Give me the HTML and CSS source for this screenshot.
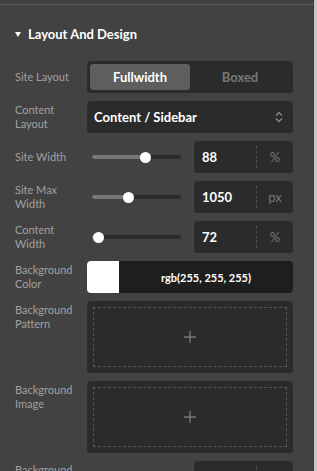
FILE: index.html
```html
<!DOCTYPE html>
<html lang="en">
<head>
  <meta charset="UTF-8">
  <title>Layout And Design</title>
  <link rel="stylesheet" href="styles.css">
</head>
<body>
  <div class="page">
    <div class="panel">
      <div class="section-title">
        <span class="caret"></span>
        <span>Layout And Design</span>
      </div>

      <div class="rows">
        <div class="row">
          <div class="label"><span>Site Layout</span></div>
          <div class="control">
            <div class="segmented">
              <div class="seg active">Fullwidth</div>
              <div class="seg">Boxed</div>
            </div>
          </div>
        </div>

        <div class="row">
          <div class="label"><span>Content Layout</span></div>
          <div class="control">
            <div class="select">
              <span>Content / Sidebar</span>
              <svg class="chevrons" width="8" height="12" viewBox="0 0 8 12">
                <path d="M1 4.5 L4 1.5 L7 4.5 M1 7.5 L4 10.5 L7 7.5" fill="none" stroke="#8a8a8a" stroke-width="1.3"/>
              </svg>
            </div>
          </div>
        </div>

        <div class="row">
          <div class="label"><span>Site Width</span></div>
          <div class="control split">
            <div class="slider"><div class="track"><div class="fill" style="width: 60%"></div></div></div>
            <div class="num"><span class="num-value">88</span><span class="num-unit">%</span></div>
          </div>
        </div>

        <div class="row">
          <div class="label"><span>Site Max Width</span></div>
          <div class="control split">
            <div class="slider"><div class="track"><div class="fill" style="width: 41%"></div></div></div>
            <div class="num"><span class="num-value">1050</span><span class="num-unit">px</span></div>
          </div>
        </div>

        <div class="row">
          <div class="label"><span>Content Width</span></div>
          <div class="control split">
            <div class="slider"><div class="track"><div class="fill" style="width: 7%"></div></div></div>
            <div class="num"><span class="num-value">72</span><span class="num-unit">%</span></div>
          </div>
        </div>

        <div class="row">
          <div class="label"><span>Background Color</span></div>
          <div class="control">
            <div class="color">
              <span class="swatch"></span>
              <span class="color-value">rgb(255, 255, 255)</span>
            </div>
          </div>
        </div>

        <div class="row">
          <div class="label"><span>Background Pattern</span></div>
          <div class="control">
            <div class="upload">
              <div class="upload-inner">
                <svg width="12" height="12" viewBox="0 0 12 12">
                  <path d="M6 0 V12 M0 6 H12" stroke="#777" stroke-width="1.4"/>
                </svg>
              </div>
            </div>
          </div>
        </div>

        <div class="row">
          <div class="label"><span>Background Image</span></div>
          <div class="control">
            <div class="upload">
              <div class="upload-inner">
                <svg width="12" height="12" viewBox="0 0 12 12">
                  <path d="M6 0 V12 M0 6 H12" stroke="#777" stroke-width="1.4"/>
                </svg>
              </div>
            </div>
          </div>
        </div>

        <div class="row">
          <div class="label"><span>Background Size</span></div>
          <div class="control split">
            <div class="slider"><div class="track"><div class="fill" style="width: 50%"></div></div></div>
            <div class="num"><span class="num-value">100</span><span class="num-unit">%</span></div>
          </div>
        </div>
      </div>
    </div>
    <div class="scrollbar"></div>
  </div>
</body>
</html>
```

FILE: styles.css
```css
body {
  margin: 0;
  background: #424242;
  font-family: Lato, "Open Sans", Arial, sans-serif;
  color: #fff;
}
.page {
  display: flex;
  height: 471px;
  overflow: hidden;
}
.panel {
  flex: 1;
  margin-top: 4px;
  border-top: 1px dotted #777;
}
.scrollbar {
  width: 3px;
  border-left: 1px solid #383838;
  background: #c8c8c8;
}
.section-title {
  display: flex;
  align-items: center;
  gap: 7px;
  padding: 20px 15px 0;
  height: 18px;
  margin-bottom: 18px;
  font-size: 13px;
  font-weight: 700;
}
.caret {
  width: 0;
  height: 0;
  border-left: 3.5px solid transparent;
  border-right: 3.5px solid transparent;
  border-top: 5px solid #fff;
}
.rows {
  display: flex;
  flex-direction: column;
  gap: 8px;
  padding: 0 20px 0 15px;
}
.row { display: flex; align-items: flex-start; }
.label {
  width: 72px;
  min-height: 32px;
  padding-right: 10px;
  box-sizing: border-box;
  display: flex;
  align-items: center;
  font-size: 11px;
  line-height: 14px;
  color: #a0a0a0;
}
.control { flex: 1; min-width: 0; }
.split {
  display: grid;
  grid-template-columns: 1fr 1fr;
  gap: 8px;
}

.segmented {
  display: flex;
  height: 32px;
  box-sizing: border-box;
  padding: 3px;
  background: #2b2b2b;
  border-radius: 4px;
}
.seg {
  flex: 1;
  display: flex;
  align-items: center;
  justify-content: center;
  font-size: 13px;
  font-weight: 700;
  color: #777;
  border-radius: 3px;
}
.seg.active { background: #5e5e5e; color: #fff; }

.select {
  display: flex;
  align-items: center;
  justify-content: space-between;
  height: 32px;
  padding: 0 10px 0 7px;
  background: #2b2b2b;
  border-radius: 4px;
  font-size: 13px;
  font-weight: 700;
}

.slider {
  display: flex;
  align-items: center;
  height: 32px;
  padding: 0 5px;
}
.track {
  flex: 1;
  height: 4px;
  background: #2b2b2b;
  border-radius: 2px;
}
.fill {
  position: relative;
  height: 100%;
  background: #777;
  border-radius: 2px;
}
.fill::after {
  content: "";
  position: absolute;
  right: -5.5px;
  top: -3.5px;
  width: 11px;
  height: 11px;
  border-radius: 50%;
  background: #fff;
}

.num {
  display: flex;
  height: 32px;
  background: #2b2b2b;
  border-radius: 4px;
}
.num-value {
  flex: 1;
  display: flex;
  align-items: center;
  padding-left: 8px;
  font-size: 13px;
  font-weight: 700;
}
.num-unit {
  width: 36px;
  margin: 5px 0;
  border-left: 1px dashed #4e4e4e;
  display: flex;
  align-items: center;
  justify-content: center;
  font-size: 13px;
  color: #777;
}

.color {
  display: flex;
  height: 32px;
  background: #1e1e1e;
  border-radius: 4px;
  overflow: hidden;
}
.swatch { width: 32px; background: #fff; }
.color-value {
  flex: 1;
  display: flex;
  align-items: center;
  justify-content: center;
  font-size: 11px;
  font-weight: 700;
}

.upload {
  height: 72px;
  box-sizing: border-box;
  padding: 6px;
  background: #2b2b2b;
  border-radius: 4px;
}
.upload-inner {
  height: 100%;
  box-sizing: border-box;
  border: 1px dashed #555;
  display: flex;
  align-items: center;
  justify-content: center;
}
```
